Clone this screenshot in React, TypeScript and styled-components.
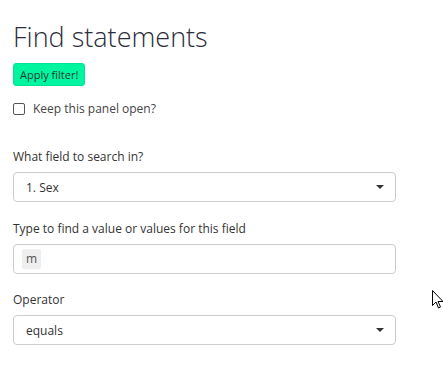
import React from 'react';
import styled, { createGlobalStyle } from 'styled-components';

const GlobalStyle = createGlobalStyle`
    body {
        margin: 0;
        background: #fff;
        font-family: "Open Sans", "Liberation Sans", sans-serif;
        color: #333;
    }
`;

const Page = styled.div`
    position: relative;
    width: 443px;
    height: 370px;
    overflow: hidden;
    padding: 0 47px 0 13px;
    box-sizing: border-box;
`;

const Title = styled.h1`
    margin: 0;
    padding-top: 20px;
    font-size: 27px;
    font-weight: 300;
    line-height: 33px;
    color: #2b2d3a;
`;

const ApplyButton = styled.button`
    display: block;
    margin-top: 10px;
    height: 23px;
    padding: 0 6px;
    background: #00f5a0;
    border: 1px solid #00e396;
    border-radius: 3px;
    font-family: inherit;
    font-size: 11px;
    color: #1d3b30;
    cursor: pointer;
`;

const CheckRow = styled.label`
    display: flex;
    align-items: center;
    gap: 8px;
    margin-top: 14px;
    font-size: 12px;
    color: #444;
`;

const Box = styled.span`
    width: 10px;
    height: 10px;
    border: 1px solid #555;
    border-radius: 2px;
`;

const Field = styled.div`
    display: flex;
    flex-direction: column;
    margin-top: ${(p: { gap: number }) => p.gap}px;
`;

const Label = styled.div`
    font-size: 12px;
    line-height: 18px;
    color: #333;
    margin-bottom: 6px;
`;

const Control = styled.div`
    height: 30px;
    box-sizing: border-box;
    border: 1px solid #ccc;
    border-radius: 4px;
    display: flex;
    align-items: center;
    justify-content: space-between;
    padding: 0 11px 0 12px;
    font-size: 12px;
    color: #333;
`;

const InputControl = styled(Control)`
    padding-left: 8px;
`;

const Chip = styled.span`
    background: #eee;
    border-radius: 2px;
    padding: 2px 4px;
    line-height: 16px;
    font-size: 12px;
    color: #555;
`;

const Caret = styled.span`
    width: 0;
    height: 0;
    border-left: 4px solid transparent;
    border-right: 4px solid transparent;
    border-top: 4px solid #333;
`;

const Cursor = styled.svg`
    position: absolute;
    left: 432px;
    top: 290px;
`;

export default function App() {
    return (
        <Page>
            <GlobalStyle />
            <Title>Find statements</Title>
            <ApplyButton>Apply filter!</ApplyButton>
            <CheckRow><Box />Keep this panel open?</CheckRow>
            <Field gap={31}>
                <Label>What field to search in?</Label>
                <Control>1. Sex<Caret /></Control>
            </Field>
            <Field gap={18}>
                <Label>Type to find a value or values for this field</Label>
                <InputControl><Chip>m</Chip></InputControl>
            </Field>
            <Field gap={17}>
                <Label>Operator</Label>
                <Control>equals<Caret /></Control>
            </Field>
            <Cursor width="12" height="20" viewBox="0 0 12 20">
                <path d="M0.5 0.5 L0.5 15.5 L4 12 L6.5 18 L8.5 17 L6 11.5 L11 11.5 Z" fill="#fff" stroke="#000" strokeWidth="1" />
            </Cursor>
        </Page>
    );
}
